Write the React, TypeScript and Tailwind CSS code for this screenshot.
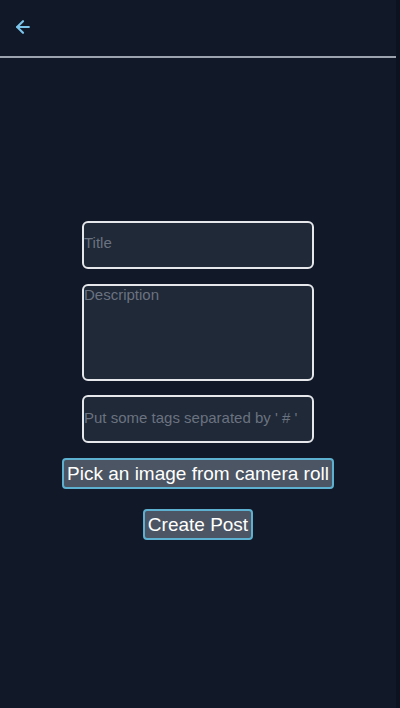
import React from "react";

export default function App() {
  return (
    <div
      className="w-[400px] h-[708px] bg-[#111827] flex overflow-hidden"
      style={{ fontFamily: '"Liberation Sans", Arial, sans-serif' }}
    >
      <div className="w-[396px] flex flex-col">
        <div className="h-[58px] flex items-center pl-[13px] border-b-2 border-[#9ca3af]">
          <svg width="20" height="20" viewBox="0 0 24 24" fill="none" stroke="#7cc4ea" strokeWidth="2.6" strokeLinecap="round" strokeLinejoin="round" className="mt-[-2px]">
            <path d="M19 12H5" />
            <path d="M12 19l-7-7 7-7" />
          </svg>
        </div>
        <div className="flex flex-col items-center pt-[163px]">
          <input
            placeholder="Title"
            className="w-[232px] h-[48px] bg-[#1f2937] border-2 border-[#e5e7eb] rounded-[6px] text-[15px] text-white placeholder:text-[#6b7280] outline-none px-0 pb-[6px]"
          />
          <textarea
            placeholder="Description"
            className="mt-[15px] w-[232px] h-[97px] bg-[#1f2937] border-2 border-[#e5e7eb] rounded-[6px] text-[15px] leading-[15px] text-white placeholder:text-[#6b7280] outline-none resize-none px-0 pt-[1px]"
          />
          <input
            placeholder="Put some tags separated by ' # '"
            className="mt-[14px] w-[232px] h-[48px] bg-[#1f2937] border-2 border-[#e5e7eb] rounded-[6px] text-[15px] text-white placeholder:text-[#6b7280] outline-none px-0 pb-[4px]"
          />
          <button className="mt-[15px] h-[31px] px-[3px] bg-[#4b5563] border-2 border-[#5eb0d0] rounded-[4px] text-[19px] leading-none text-white">
            Pick an image from camera roll
          </button>
          <button className="mt-[20px] h-[31px] px-[3px] bg-[#4b5563] border-2 border-[#5eb0d0] rounded-[4px] text-[19px] leading-none text-white">
            Create Post
          </button>
        </div>
      </div>
      <div className="w-[4px] bg-[#0d1220]" />
    </div>
  );
}
